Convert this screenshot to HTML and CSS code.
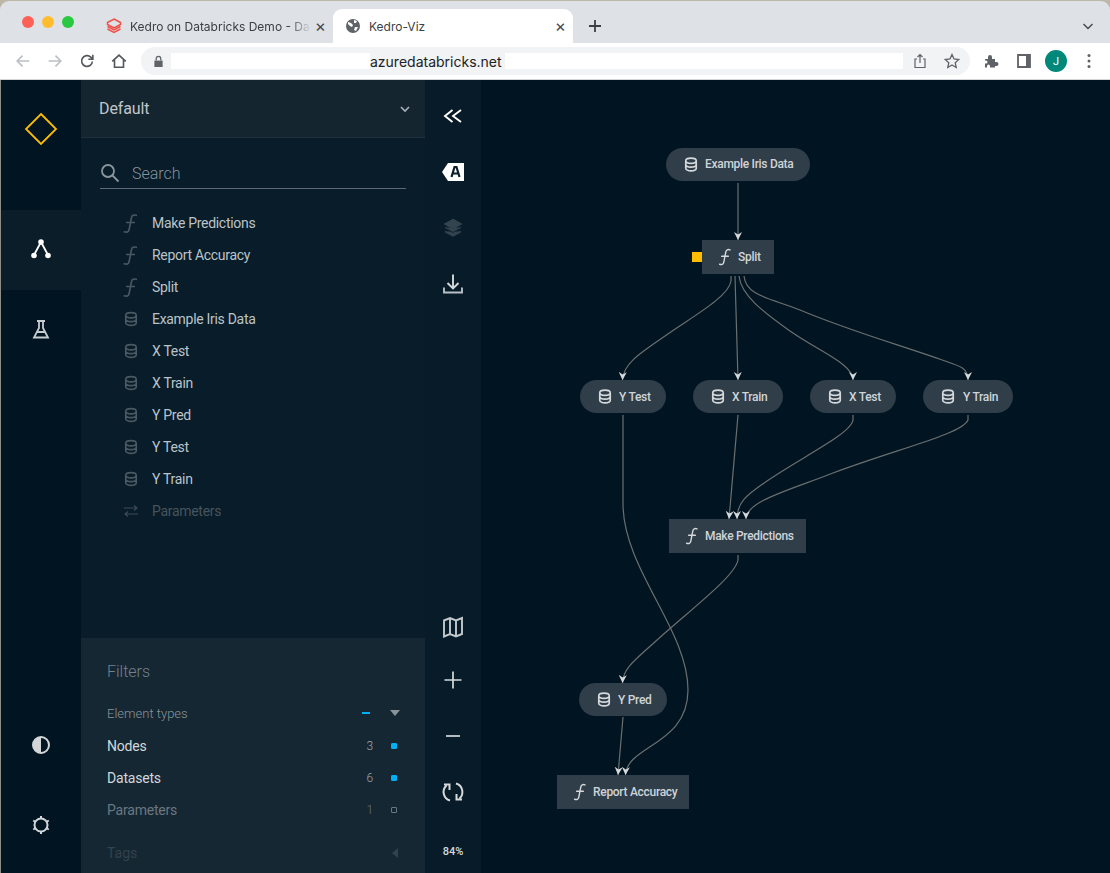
FILE: index.html
```html
<!DOCTYPE html>
<html lang="en">
<head>
    <meta charset="UTF-8">
    <meta name="viewport" content="width=device-width, initial-scale=1.0">
    <title>Kedro-Viz</title>
    <link rel="stylesheet" href="styles.css">
</head>
<body>
    <svg class="sprite" xmlns="http://www.w3.org/2000/svg">
        <symbol id="i-db" viewBox="0 0 24 24"><path d="M5 7c0-2 3-3.500 7-3.500s7 1.500 7 3.500v10c0 2-3 3.500-7 3.500s-7-1.500-7-3.500z M5 7c0 2 3 3.500 7 3.500s7-1.500 7-3.500 M5 12c0 2 3 3.500 7 3.500s7-1.500 7-3.500" fill="none" stroke="currentColor" stroke-width="2.200"/></symbol>
        <symbol id="i-fn" viewBox="0 0 24 24"><path d="M18 3.500c-2.500-1-4.500-.2-5 2.300L10.500 18.500c-.5 2.500-2.500 3-5 2.200 M8 11h8" fill="none" stroke="currentColor" stroke-width="1.700" stroke-linecap="round"/></symbol>
    </svg>

    <div class="window">
        <div class="tabstrip">
            <div class="lights">
                <span class="light red"></span>
                <span class="light amber"></span>
                <span class="light green"></span>
            </div>
            <div class="tab">
                <svg class="favicon" viewBox="0 0 16 16"><path d="M8 1l6.500 3.500v2L8 10 1.500 6.500v-2z M1.500 8.500L8 12l6.500-3.500 M1.500 11L8 14.500l6.500-3.500" fill="none" stroke="#f0524a" stroke-width="1.500"/></svg>
                <span class="tab-title">Kedro on Databricks Demo - Da</span>
                <span class="tab-close">&times;</span>
            </div>
            <div class="tab active">
                <svg class="favicon" viewBox="0 0 16 16"><circle cx="8" cy="8" r="7" fill="#5f6368"/><path d="M3 4l3 1 2 2-1 2-2-1-2-2z M9 2l3 1-1 2-2 0z M10 9l3 0-2 4-2-1z" fill="#fff"/></svg>
                <span class="tab-title">Kedro-Viz</span>
                <span class="tab-close">&times;</span>
            </div>
            <span class="new-tab">
                <svg viewBox="0 0 14 14"><path d="M7 1v12M1 7h12" stroke="#3c4043" stroke-width="1.800"/></svg>
            </span>
            <svg class="tab-menu" viewBox="0 0 12 12"><path d="M1.500 4l4.500 4.500L10.500 4" fill="none" stroke="#45484c" stroke-width="1.400"/></svg>
        </div>

        <div class="browserbar">
            <svg class="bar-icon" viewBox="0 0 20 20"><path d="M17 10H4M9.500 4L3.500 10l6 6" fill="none" stroke="#bcc0c4" stroke-width="1.800"/></svg>
            <svg class="bar-icon" viewBox="0 0 20 20"><path d="M3 10h13M10.500 4l6 6-6 6" fill="none" stroke="#bcc0c4" stroke-width="1.800"/></svg>
            <svg class="bar-icon" viewBox="0 0 20 20"><path d="M16 10.500a6 6 0 1 1-1.800-4.800L16 7.500 M16.500 3v5h-5" fill="none" stroke="#54575b" stroke-width="1.800"/></svg>
            <svg class="bar-icon" viewBox="0 0 20 20"><path d="M2.500 10.500L10 3.500l7.500 7 M5 9v8h10V9" fill="none" stroke="#54575b" stroke-width="1.800"/></svg>
            <div class="urlbar">
                <svg class="lock" viewBox="0 0 12 14"><path d="M1.500 6h9v7h-9z" fill="#5f6368"/><path d="M3.500 6V4a2.500 2.500 0 0 1 5 0v2" fill="none" stroke="#5f6368" stroke-width="1.400"/></svg>
                <span class="redact redact-a"></span>
                <span class="url">azuredatabricks.net</span>
                <span class="redact redact-b"></span>
                <svg class="url-icon" viewBox="0 0 16 16"><path d="M5 6H3v8.500h10V6h-2 M8 10V1.500M5.500 4L8 1.500 10.500 4" fill="none" stroke="#5f6368" stroke-width="1.200"/></svg>
                <svg class="url-icon star" viewBox="0 0 16 16"><path d="M8 1.500l2 4.500 4.800.5-3.600 3.200 1 4.800L8 12l-4.200 2.500 1-4.800L1.200 6.500 6 6z" fill="none" stroke="#5f6368" stroke-width="1.300"/></svg>
            </div>
            <svg class="bar-icon ext" viewBox="0 0 16 16"><path d="M2 6h3V4a2 2 0 0 1 4 0v2h3v3h1.500a2 2 0 0 1 0 4H12v1.500H7v-1.500a1.500 1.500 0 0 0-3 0v1.500H2v-4h1a1.500 1.500 0 0 0 0-3H2z" fill="#5f6368"/></svg>
            <svg class="bar-icon panel" viewBox="0 0 16 16"><path d="M2 2h12v12H2z" fill="none" stroke="#5f6368" stroke-width="1.800"/><path d="M10 2h4v12h-4z" fill="#5f6368"/></svg>
            <span class="avatar">J</span>
            <svg class="bar-icon dots" viewBox="0 0 16 16"><circle cx="8" cy="2.500" r="1.500" fill="#5f6368"/><circle cx="8" cy="8" r="1.500" fill="#5f6368"/><circle cx="8" cy="13.500" r="1.500" fill="#5f6368"/></svg>
        </div>

        <div class="app">
            <nav class="rail">
                <div class="rail-logo">
                    <svg viewBox="0 0 34 34"><path d="M17 2L32 17 17 32 2 17z" fill="none" stroke="#ffbc00" stroke-width="1.800"/></svg>
                </div>
                <div class="rail-item current">
                    <svg viewBox="0 0 24 24"><path d="M12 4L5 17M12 4l7 13" stroke="#fff" stroke-width="1.800"/><circle cx="12" cy="4" r="2.800" fill="#fff"/><circle cx="5" cy="17.500" r="2.800" fill="#fff"/><circle cx="19" cy="17.500" r="2.800" fill="#fff"/></svg>
                </div>
                <div class="rail-item">
                    <svg viewBox="0 0 24 24"><path d="M8 3h8 M10 3v7L5 19.500h14L14 10V3 M8 14h8" fill="none" stroke="#c7ccd0" stroke-width="1.800"/></svg>
                </div>
                <div class="rail-bottom">
                    <div class="rail-tool">
                        <svg viewBox="0 0 24 24"><circle cx="12" cy="12" r="8" fill="none" stroke="#d3d6d8" stroke-width="2"/><path d="M12 4a8 8 0 0 0 0 16z" fill="#d3d6d8"/></svg>
                    </div>
                    <div class="rail-tool">
                        <svg viewBox="0 0 24 24"><circle cx="12" cy="12" r="6.500" fill="none" stroke="#d3d6d8" stroke-width="2"/><path d="M12 3v3M12 18v3M4.200 7.500l2.600 1.500M17.200 15l2.600 1.500M4.200 16.500L6.800 15M17.200 9l2.600-1.500" stroke="#d3d6d8" stroke-width="2"/></svg>
                    </div>
                </div>
            </nav>

            <aside class="sidebar">
                <div class="pipeline">
                    <span>Default</span>
                    <svg viewBox="0 0 12 12"><path d="M2 4l4 4 4-4" fill="none" stroke="#a9b1b6" stroke-width="1.600"/></svg>
                </div>
                <div class="search">
                    <svg viewBox="0 0 20 20"><circle cx="8" cy="8" r="6" fill="none" stroke="#8a959c" stroke-width="1.800"/><path d="M12.500 12.500L18.500 18.500" stroke="#8a959c" stroke-width="1.800"/></svg>
                    <span>Search</span>
                </div>
                <ul class="node-list">
                    <li><svg class="row-icon"><use href="#i-fn"/></svg>Make Predictions</li>
                    <li><svg class="row-icon"><use href="#i-fn"/></svg>Report Accuracy</li>
                    <li><svg class="row-icon"><use href="#i-fn"/></svg>Split</li>
                    <li><svg class="row-icon small"><use href="#i-db"/></svg>Example Iris Data</li>
                    <li><svg class="row-icon small"><use href="#i-db"/></svg>X Test</li>
                    <li><svg class="row-icon small"><use href="#i-db"/></svg>X Train</li>
                    <li><svg class="row-icon small"><use href="#i-db"/></svg>Y Pred</li>
                    <li><svg class="row-icon small"><use href="#i-db"/></svg>Y Test</li>
                    <li><svg class="row-icon small"><use href="#i-db"/></svg>Y Train</li>
                    <li class="off"><svg class="row-icon" viewBox="0 0 16 16"><path d="M1 5h13M11 2.500L14 5l-3 2.500 M15 11H2M5 8.500L2 11l3 2.500" fill="none" stroke="currentColor" stroke-width="1.200"/></svg>Parameters</li>
                </ul>
                <div class="filters">
                    <h3>Filters</h3>
                    <div class="filter-head">
                        <span>Element types</span>
                        <span class="dash"></span>
                        <span class="caret-down"></span>
                    </div>
                    <div class="filter-row"><span class="name">Nodes</span><span class="count">3</span><span class="dot on"></span></div>
                    <div class="filter-row"><span class="name">Datasets</span><span class="count">6</span><span class="dot on"></span></div>
                    <div class="filter-row off"><span class="name">Parameters</span><span class="count">1</span><span class="dot"></span></div>
                    <div class="filter-tags">
                        <span>Tags</span>
                        <span class="caret-left"></span>
                    </div>
                </div>
            </aside>

            <div class="tools">
                <svg viewBox="0 0 24 24"><path d="M11.500 6L4 12l7.500 6 M20 6l-8 6 8 6" fill="none" stroke="#fff" stroke-width="1.900"/></svg>
                <svg viewBox="0 0 24 24"><path d="M7 3h16v18H7L1 12z" fill="#fff"/><path d="M10.500 17l3-10h2l3 10 M11.500 13.500h6" fill="none" stroke="#0a1f2c" stroke-width="2.200"/></svg>
                <svg viewBox="0 0 24 24"><path d="M12 3.500l8 4.500-8 4.500L4 8z M4 11.500l8 4.500 8-4.500 M4 15.500l8 4.500 8-4.500" fill="#34444f" stroke="#34444f" stroke-width="1.500"/><path d="M4 12l8 4.500 8-4.500" fill="none" stroke="#071c28" stroke-width=".8"/></svg>
                <svg viewBox="0 0 24 24"><path d="M12 2.500v14 M6.500 11l5.500 5.500 5.500-5.500" fill="none" stroke="#d5d9dc" stroke-width="1.900"/><path d="M3 15.500v5h18v-5" fill="none" stroke="#b9c0c5" stroke-width="1.900"/></svg>
                <div class="tools-spacer"></div>
                <svg class="tight" viewBox="0 0 24 24"><path d="M3 5.500l6-2.500 6 2.500 6-2.500v16l-6 2.500-6-2.500-6 2.500z M9 3v15.500 M15 5.500V21" fill="none" stroke="#c3c9cd" stroke-width="1.900"/></svg>
                <svg viewBox="0 0 24 24"><path d="M12 3.500v17M3.500 12h17" stroke="#d5d9dc" stroke-width="1.700"/></svg>
                <svg viewBox="0 0 24 24"><path d="M5 12h14" stroke="#d5d9dc" stroke-width="1.700"/></svg>
                <svg viewBox="0 0 24 24"><path d="M9 20.500A8.800 8.800 0 0 1 5.500 5.500 M15 3.500a8.800 8.800 0 0 1 3.500 15 M3 4.500h5.500V10 M21 19.500h-5.500V14" fill="none" stroke="#d5d9dc" stroke-width="2"/></svg>
                <span class="zoom-level">84%</span>
            </div>

            <main class="graph">
                <svg class="canvas" viewBox="481 80 629 793">
                    <defs>
                        <marker id="head" markerWidth="9" markerHeight="9" refX="8" refY="4" orient="auto" markerUnits="userSpaceOnUse">
                            <path d="M0 0L8 4 0 8 2.500 4z" fill="#d5d9dc"/>
                        </marker>
                    </defs>
                    <g class="edges">
                        <path marker-end="url(#head)" d="M738 183V240"/>
                        <path marker-end="url(#head)" d="M731 276V281C729 297 690 318 665 336C640 353 623 364 622.500 380"/>
                        <path marker-end="url(#head)" d="M735 276L738 380"/>
                        <path marker-end="url(#head)" d="M739 276C741 296 765 313 790 331C820 352 853 364 853 380"/>
                        <path marker-end="url(#head)" d="M744 276C746 296 770 298 800 310C850 331 900 345 945 361C960 366 968 368 968 380"/>
                        <path marker-end="url(#head)" d="M623 415V505C624 570 688 630 688 690C688 745 627 745 625.500 775"/>
                        <path marker-end="url(#head)" d="M738 415L729 519"/>
                        <path marker-end="url(#head)" d="M853 415V420C851 434 800 458 767 481C745 496 737 503 737 519"/>
                        <path marker-end="url(#head)" d="M968 415V420C962 434 900 448 833 473C790 490 746 501 746 519"/>
                        <path marker-end="url(#head)" d="M738 555V560C735 576 695 606 657 640C635 660 623 668 622.500 683"/>
                        <path marker-end="url(#head)" d="M623 717L618 775"/>
                    </g>

                    <rect class="mark" x="692" y="252" width="10" height="10"/>

                    <g class="node">
                        <rect x="666" y="148" width="144" height="33" rx="16.500"/>
                        <use href="#i-db" x="682" y="155.500" width="18" height="18"/>
                        <text x="705" y="168">Example Iris Data</text>
                    </g>
                    <g class="node">
                        <rect x="702" y="240" width="72" height="34"/>
                        <use href="#i-fn" x="715" y="247" width="20" height="20"/>
                        <text x="738" y="261">Split</text>
                    </g>
                    <g class="node">
                        <rect x="580" y="380" width="86" height="33" rx="16.500"/>
                        <use href="#i-db" x="596" y="387.500" width="18" height="18"/>
                        <text x="619" y="401">Y Test</text>
                    </g>
                    <g class="node">
                        <rect x="693" y="380" width="90" height="33" rx="16.500"/>
                        <use href="#i-db" x="709" y="387.500" width="18" height="18"/>
                        <text x="732" y="401">X Train</text>
                    </g>
                    <g class="node">
                        <rect x="810" y="380" width="86" height="33" rx="16.500"/>
                        <use href="#i-db" x="826" y="387.500" width="18" height="18"/>
                        <text x="849" y="401">X Test</text>
                    </g>
                    <g class="node">
                        <rect x="923" y="380" width="90" height="33" rx="16.500"/>
                        <use href="#i-db" x="939" y="387.500" width="18" height="18"/>
                        <text x="963" y="401">Y Train</text>
                    </g>
                    <g class="node">
                        <rect x="669" y="519" width="137" height="34"/>
                        <use href="#i-fn" x="682" y="526" width="20" height="20"/>
                        <text x="705" y="540">Make Predictions</text>
                    </g>
                    <g class="node">
                        <rect x="579" y="683" width="88" height="33" rx="16.500"/>
                        <use href="#i-db" x="595" y="690.500" width="18" height="18"/>
                        <text x="618" y="704">Y Pred</text>
                    </g>
                    <g class="node">
                        <rect x="557" y="775" width="132" height="34"/>
                        <use href="#i-fn" x="570" y="782" width="20" height="20"/>
                        <text x="593" y="796">Report Accuracy</text>
                    </g>
                </svg>
            </main>
        </div>
    </div>
</body>
</html>
```

FILE: styles.css
```css
* {
    box-sizing: border-box;
}
html, body {
    margin: 0;
    height: 100%;
    overflow: hidden;
}
body {
    background-color: #bdb7a8;
    font-family: "Roboto", "Liberation Sans", sans-serif;
}
.sprite {
    display: none;
}
.window {
    display: flex;
    flex-direction: column;
    height: 873px;
    padding-top: 1px;
}

/* browser chrome */
.tabstrip {
    display: flex;
    align-items: flex-end;
    height: 42px;
    background-color: #dee1e6;
    border-radius: 9px 9px 0 0;
    font-family: "Inter", "Liberation Sans", sans-serif;
    font-size: 12px;
    color: #3c4043;
}
.lights {
    display: flex;
    gap: 8px;
    align-self: flex-start;
    width: 98px;
    padding: 15px 0 0 22px;
}
.light {
    width: 12px;
    height: 12px;
    border-radius: 50%;
}
.light.red { background-color: #fe5f57; }
.light.amber { background-color: #febc2e; }
.light.green { background-color: #28c840; }
.tab {
    display: flex;
    align-items: center;
    width: 235px;
    height: 34px;
    padding: 0 7px 0 8px;
}
.tab.active {
    width: 240px;
    margin-left: 0;
    padding-left: 12px;
    background-color: #fff;
    border-radius: 9px 9px 0 0;
}
.favicon {
    width: 16px;
    height: 16px;
    flex: none;
}
.tab-title {
    flex: 1;
    margin-left: 8px;
    white-space: nowrap;
    overflow: hidden;
}
.tab:not(.active) .tab-title {
    -webkit-mask-image: linear-gradient(to right, #000 86%, transparent 98%);
    mask-image: linear-gradient(to right, #000 86%, transparent 98%);
}
.tab-close {
    font-size: 17px;
    line-height: 1;
    color: #45484c;
}
.new-tab {
    display: flex;
    align-items: center;
    height: 34px;
    margin-left: 15px;
}
.new-tab svg {
    width: 14px;
    height: 14px;
}
.tab-menu {
    width: 12px;
    height: 12px;
    margin: 0 16px 11px auto;
}
.browserbar {
    display: flex;
    align-items: center;
    height: 37px;
    padding: 0 13px 0 14px;
    background-color: #fff;
    border-bottom: 1px solid #d4d6d9;
}
.bar-icon {
    width: 18px;
    height: 18px;
    flex: none;
    margin-right: 14px;
}
.urlbar {
    display: flex;
    align-items: center;
    width: 831px;
    height: 28px;
    margin: 0 13px 0 -1px;
    padding-left: 12px;
    border-radius: 14px;
    background-color: #f1f3f4;
}
.lock {
    width: 11px;
    height: 13px;
    flex: none;
}
.redact {
    height: 16px;
    background-color: #fff;
}
.redact-a {
    width: 199px;
    margin-left: 7px;
}
.redact-b {
    width: 398px;
    margin-left: 3px;
}
.url {
    font-family: "Inter", "Liberation Sans", sans-serif;
    font-size: 14px;
    color: #202124;
    white-space: nowrap;
}
.url-icon {
    width: 16px;
    height: 16px;
    margin-left: 9px;
}
.url-icon.star {
    margin-left: 16px;
}
.bar-icon.ext {
    width: 16px;
    height: 16px;
    margin-right: 17px;
}
.bar-icon.panel {
    width: 16px;
    height: 16px;
    margin-right: 13px;
}
.avatar {
    display: flex;
    align-items: center;
    justify-content: center;
    width: 22px;
    height: 22px;
    flex: none;
    border-radius: 50%;
    background-color: #00897b;
    color: #fff;
    font-size: 11px;
}
.bar-icon.dots {
    width: 16px;
    height: 16px;
    margin: 0 0 0 14px;
}

/* app */
.app {
    display: flex;
    flex: 1;
    min-height: 0;
    background-color: #001521;
    color: #d0d5d8;
}
.rail {
    display: flex;
    flex-direction: column;
    width: 81px;
    flex: none;
    border-left: 1px solid #8d8d86;
    background-color: #001521;
}
.rail-logo {
    display: flex;
    align-items: center;
    justify-content: center;
    height: 130px;
    padding-bottom: 32px;
}
.rail-logo svg {
    width: 34px;
    height: 34px;
}
.rail-item {
    display: flex;
    align-items: center;
    justify-content: center;
    height: 80px;
}
.rail-item.current {
    background-color: #0a1d29;
}
.rail-item svg, .rail-tool svg {
    width: 24px;
    height: 24px;
}
.rail-bottom {
    display: flex;
    flex-direction: column;
    margin-top: auto;
    padding-bottom: 8px;
}
.rail-tool {
    display: flex;
    align-items: center;
    justify-content: center;
    height: 80px;
}

/* sidebar */
.sidebar {
    display: flex;
    flex-direction: column;
    width: 344px;
    flex: none;
    background-color: #081c29;
}
.pipeline {
    display: flex;
    align-items: center;
    justify-content: space-between;
    height: 58px;
    padding: 0 14px 0 18px;
    background-color: #14252f;
    border-bottom: 1px solid #1e303b;
    font-size: 16px;
    letter-spacing: -.1px;
    color: #c0c6ca;
}
.pipeline svg {
    width: 12px;
    height: 12px;
}
.search {
    display: flex;
    align-items: center;
    gap: 12px;
    height: 36px;
    margin: 15px 19px 0;
    padding-top: 5px;
    border-bottom: 1px solid #5d6a73;
    font-size: 16px;
    font-weight: 300;
    color: #87929a;
}
.search svg {
    width: 20px;
    height: 20px;
}
.node-list {
    flex: 1;
    margin: 0;
    padding: 18px 0 0 40px;
    list-style: none;
    font-size: 14px;
    letter-spacing: -.3px;
    color: #bcc3c8;
}
.node-list li {
    display: flex;
    align-items: center;
    height: 32px;
}
.node-list li.off {
    color: #46545e;
}
.row-icon {
    width: 23px;
    height: 23px;
    flex: none;
    margin: 0 10px 0 -2px;
    color: #4a5862;
}
.row-icon.small {
    width: 18px;
    height: 18px;
    margin: 0 12px 0 1px;
}
.node-list li.off .row-icon {
    width: 16px;
    height: 16px;
    margin: 0 13px 0 2px;
    color: #3d4a54;
}
.filters {
    height: 235px;
    padding: 24px 25px 0 26px;
    background-color: #152733;
    font-size: 14px;
}
.filters h3 {
    margin: 0 0 21px;
    font-size: 16px;
    line-height: 20px;
    font-weight: 300;
    color: #76828a;
}
.filter-head {
    display: flex;
    align-items: center;
    height: 20px;
    font-size: 13px;
    font-weight: 300;
    color: #89949b;
}
.dash {
    width: 8px;
    height: 2px;
    margin-left: auto;
    background-color: #00b0f5;
}
.caret-down {
    width: 0;
    height: 0;
    margin-left: 20px;
    border-left: 5px solid transparent;
    border-right: 5px solid transparent;
    border-top: 6px solid #89949b;
}
.filter-row {
    display: flex;
    align-items: center;
    height: 32px;
    letter-spacing: -.2px;
    color: #d3d7da;
}
.filter-row:nth-of-type(2) {
    margin-top: 7px;
}
.filter-row.off {
    color: #6b7780;
}
.filter-row .count {
    margin-left: auto;
    font-size: 12px;
    font-weight: 300;
    color: #a0a9af;
}
.filter-row.off .count {
    color: #6b7780;
}
.dot {
    width: 6px;
    height: 6px;
    margin: 0 3px 0 18px;
    border: 1px solid #6b7780;
    border-radius: 1px;
}
.dot.on {
    background-color: #00b0f5;
    border-color: #00b0f5;
}
.filter-tags {
    display: flex;
    align-items: center;
    justify-content: space-between;
    height: 32px;
    margin-top: 11px;
    color: #33424c;
}
.caret-left {
    width: 0;
    height: 0;
    margin-right: 2px;
    border-top: 5px solid transparent;
    border-bottom: 5px solid transparent;
    border-right: 6px solid #33424c;
}

/* tool column */
.tools {
    display: flex;
    flex-direction: column;
    align-items: center;
    width: 56px;
    flex: none;
    padding-top: 24px;
    background-color: #071c28;
}
.tools svg {
    width: 24px;
    height: 24px;
    flex: none;
    margin-bottom: 32px;
}
.tools svg.tight {
    margin-bottom: 29px;
}
.tools-spacer {
    flex: 1;
}
.zoom-level {
    height: 28px;
    margin-top: 9px;
    font-size: 11px;
    font-weight: 500;
    color: #d5d9dc;
}

/* graph */
.graph {
    position: relative;
    flex: 1;
    background-color: #001521;
}
.canvas {
    position: absolute;
    inset: 0;
    width: 100%;
    height: 100%;
}
.edges path {
    fill: none;
    stroke: #6c6f70;
    stroke-width: 1.200;
}
.mark {
    fill: #ffbc00;
}
.node rect {
    fill: #2f3e49;
}
.node use {
    color: #d5d9dc;
}
.node text {
    fill: #cfd4d8;
    font-size: 12px;
    font-weight: 500;
    letter-spacing: -.3px;
}
```
